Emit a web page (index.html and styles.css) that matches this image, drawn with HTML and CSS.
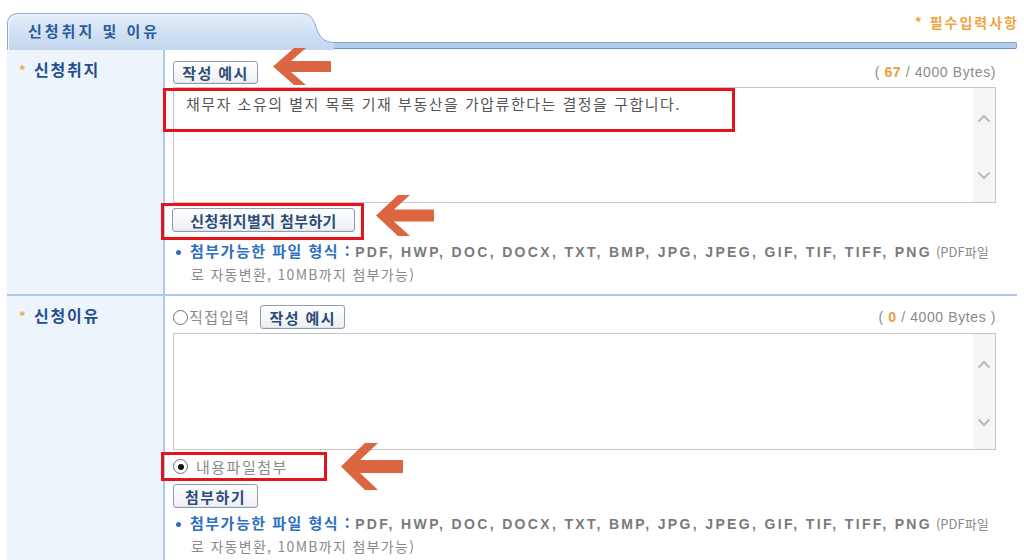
FILE: index.html
```html
<!DOCTYPE html>
<html lang="ko">
<head>
<meta charset="utf-8">
<link rel="stylesheet" href="styles.css">
</head>
<body>
<div class="page">
  <div class="head">
    <div class="tab">
      <div class="tab-body">신청취지 및 이유</div>
      <svg class="tab-curve" width="34" height="37" viewBox="0 0 34 37">
        <defs>
          <linearGradient id="tg" x1="0" y1="0" x2="0" y2="1">
            <stop offset="0" stop-color="#e4edf8"/>
            <stop offset="1" stop-color="#c2d6ee"/>
          </linearGradient>
        </defs>
        <path d="M0 0.5 C10 0.5 12 3 16 14 C20 25 24 29 34 29.5 L34 37 L0 37 Z" fill="url(#tg)"/>
        <path d="M0 0.5 C10 0.5 12 3 16 14 C20 25 24 29 34 29.5" fill="none" stroke="#86abd8" stroke-width="1"/>
      </svg>
    </div>
    <div class="head-right">
      <div class="req">* 필수입력사항</div>
      <div class="bar"></div>
    </div>
  </div>

  <div class="row row1">
    <div class="label"><span class="star">*</span>신청취지</div>
    <div class="content">
      <div class="topline">
        <button class="btn btn-ex">작성 예시</button>
        <div class="count">( <span class="num">67</span> / 4000 Bytes)</div>
      </div>
      <div class="area">
        <div class="area-text">채무자 소유의 별지 목록 기재 부동산을 가압류한다는 결정을 구합니다.</div>
        <div class="scroll">
          <svg width="14" height="9" viewBox="0 0 14 9"><path d="M1.5 7.5 L7 2 L12.5 7.5" fill="none" stroke="#b9b9b9" stroke-width="2"/></svg>
          <svg width="14" height="9" viewBox="0 0 14 9"><path d="M1.5 1.5 L7 7 L12.5 1.5" fill="none" stroke="#b9b9b9" stroke-width="2"/></svg>
        </div>
        <div class="mark mark-text"></div>
      </div>
      <div class="redbox redbox-btn">
        <button class="btn btn-wide">신청취지별지 첨부하기</button>
      </div>
      <div class="notes">
        <div class="l1"><span class="dot"></span><span class="ntitle">첨부가능한 파일 형식 :</span> <span class="types">PDF, HWP, DOC, DOCX, TXT, BMP, JPG, JPEG, GIF, TIF, TIFF, PNG</span> <span class="plain tail">(PDF파일</span></div>
        <div class="l2 plain">로 자동변환, 10MB까지 첨부가능)</div>
      </div>
      <svg class="arrow arrow1" width="58" height="37" viewBox="0 0 58 37"><polygon points="0,18.5 21,0 33,0 18,13 58,13 58,24 18,24 33,37 21,37" fill="#db6641"/></svg>
      <svg class="arrow arrow2" width="58" height="41" viewBox="0 0 58 41"><polygon points="0,20.5 22,0 34,0 18,14.5 58,14.5 58,26.5 18,26.5 34,41 22,41" fill="#db6641"/></svg>
    </div>
  </div>

  <div class="row row2">
    <div class="label"><span class="star">*</span>신청이유</div>
    <div class="content">
      <div class="topline">
        <div class="left-ctrl">
          <span class="radio"></span><span class="rtext">직접입력</span>
          <button class="btn btn-ex btn-ex2">작성 예시</button>
        </div>
        <div class="count">( <span class="num">0</span> / 4000 Bytes )</div>
      </div>
      <div class="area area2">
        <div class="area-text"></div>
        <div class="scroll">
          <svg width="14" height="9" viewBox="0 0 14 9"><path d="M1.5 7.5 L7 2 L12.5 7.5" fill="none" stroke="#b9b9b9" stroke-width="2"/></svg>
          <svg width="14" height="9" viewBox="0 0 14 9"><path d="M1.5 1.5 L7 7 L12.5 1.5" fill="none" stroke="#b9b9b9" stroke-width="2"/></svg>
        </div>
      </div>
      <div class="redbox redbox-radio">
        <span class="radio checked"></span><span class="rtext">내용파일첨부</span>
      </div>
      <button class="btn btn-attach">첨부하기</button>
      <div class="notes notes2">
        <div class="l1"><span class="dot"></span><span class="ntitle">첨부가능한 파일 형식 :</span> <span class="types">PDF, HWP, DOC, DOCX, TXT, BMP, JPG, JPEG, GIF, TIF, TIFF, PNG</span> <span class="plain tail">(PDF파일</span></div>
        <div class="l2 plain">로 자동변환, 10MB까지 첨부가능)</div>
      </div>
      <svg class="arrow arrow3" width="62" height="47" viewBox="0 0 62 47"><polygon points="0,23.5 24,0 37,0 19,17 62,17 62,30 19,30 37,47 24,47" fill="#db6641"/></svg>
    </div>
  </div>
</div>
</body>
</html>
```
FILE: styles.css
```css
html, body {
  margin: 0;
  padding: 0;
  background: #ffffff;
}
body {
  font-family: "Noto Sans CJK KR", "Noto Sans", sans-serif;
  color: #555;
  overflow: hidden;
}
.page {
  width: 1010px;
  margin-left: 7px;
}

/* header */
.head {
  display: flex;
  height: 50px;
}
.tab {
  display: flex;
  align-items: flex-end;
  margin-top: 13px;
  height: 37px;
}
.tab-body {
  width: 272px;
  height: 36px;
  border: 1px solid #86abd8;
  border-right: none;
  border-bottom: none;
  border-top-left-radius: 10px;
  background: linear-gradient(#e4edf8, #c2d6ee);
  box-sizing: content-box;
  padding-left: 20px;
  font-size: 15px;
  font-weight: bold;
  color: #2a5b9c;
  line-height: 34px;
  letter-spacing: 3px;
  box-shadow: inset 1px 1px 0 #f4f8fd;
}
.tab-curve {
  display: block;
}
.head-right {
  flex: 1;
  display: flex;
  flex-direction: column;
  justify-content: flex-end;
}
.req {
  text-align: right;
  font-size: 14px;
  font-weight: bold;
  color: #f0a540;
  line-height: 20px;
  margin-bottom: 10px;
  margin-right: -2px;
  letter-spacing: 2px;
}
.bar {
  height: 5px;
  background: #b3cbe9;
  border-top: 1px solid #7fa4d3;
  border-bottom: 1px solid #6e96cb;
  border-right: 1px solid #7fa4d3;
  border-radius: 0 2px 2px 0;
  margin-bottom: 1px;
}

/* rows */
.row {
  display: grid;
  grid-template-columns: 158px 1fr;
  border-bottom: 2px solid #adc8ea;
}
.label {
  background: #eef4fb;
  border-right: 2px solid #adc8ea;
  padding: 8px 0 0 12px;
  font-size: 16px;
  font-weight: bold;
  color: #1f4f8f;
  line-height: 22px;
  letter-spacing: 1.8px;
}
.star {
  display: inline-block;
  color: #f0a540;
  font-size: 13px;
  width: 15px;
  vertical-align: top;
  line-height: 24px;
}
.content {
  position: relative;
  padding: 10px 21px 10px 8px;
}
.row1 .content {
  height: 224px;
}
.row2 .content {
  height: 264px;
  padding-top: 9px;
}
.topline {
  display: flex;
  justify-content: space-between;
  align-items: center;
  height: 24px;
}
.btn {
  font-family: "Noto Sans CJK KR", sans-serif;
  font-size: 15px;
  font-weight: bold;
  color: #2d4c78;
  background: linear-gradient(#ffffff, #eceff3);
  border: 1px solid #8e9db3;
  border-radius: 3px;
  height: 23px;
  padding: 0 2px;
  line-height: 19px;
  letter-spacing: 1.4px;
  cursor: pointer;
  box-shadow: inset 0 -1px 0 #dde2e8;
}
.btn-ex {
  width: 85px;
}
.count {
  font-family: "Liberation Sans", sans-serif;
  font-size: 14px;
  color: #8a8a8a;
  letter-spacing: 0.6px;
}
.num {
  color: #e3a13a;
  font-weight: bold;
}

/* textarea */
.area {
  position: relative;
  margin-top: 3px;
  height: 114px;
  border: 1px solid #c6c6c6;
  display: flex;
  background: #fff;
}
.area-text {
  flex: 1;
  padding: 5px 0 0 12px;
  font-size: 15px;
  color: #555;
  line-height: 22px;
  letter-spacing: 1.5px;
}
.scroll {
  width: 22px;
  background: #f5f5f5;
  display: flex;
  flex-direction: column;
  justify-content: space-between;
  align-items: center;
  padding: 26px 0 22px;
}
.scroll svg {
  display: block;
}
.mark {
  position: absolute;
  border: 3px solid #e3141c;
  pointer-events: none;
}
.mark-text {
  left: -11px;
  top: 0;
  width: 566px;
  height: 38px;
}

/* red framed blocks */
.redbox {
  border: 3px solid #e3141c;
  margin-left: -12px;
}
.redbox-btn {
  width: 203px;
  height: 37px;
  box-sizing: border-box;
  padding: 2px 0 0 8px;
}
.btn-wide {
  display: block;
  width: 183px;
  height: 24px;
  font-size: 15px;
  letter-spacing: 0.4px;
}
.notes {
  font-size: 14px;
  line-height: 22px;
  margin-top: 0;
}
.l1 {
  margin-left: 3px;
  white-space: nowrap;
}
.l2 {
  margin-left: 18px;
}
.dot {
  display: inline-block;
  width: 5px;
  height: 5px;
  border-radius: 50%;
  background: #2e6fc0;
  margin-right: 9px;
  vertical-align: middle;
  position: relative;
  top: -1px;
}
.ntitle {
  color: #2e6fc0;
  font-weight: bold;
  font-size: 15px;
  letter-spacing: 1.5px;
}
.types {
  font-family: "Liberation Sans", sans-serif;
  font-weight: bold;
  color: #7a7a7a;
  letter-spacing: 2.35px;
}
.plain {
  color: #8a8a8a;
  font-weight: normal;
  letter-spacing: 1.3px;
}
.plain.tail {
  font-size: 13px;
  letter-spacing: 0;
}

/* row 2 */
.left-ctrl {
  display: flex;
  align-items: center;
}
.radio {
  display: inline-block;
  width: 13px;
  height: 13px;
  border: 1px solid #6f6f6f;
  border-radius: 50%;
  background: #fff;
  box-sizing: content-box;
  position: relative;
}
.radio.checked::after {
  content: "";
  position: absolute;
  left: 3.5px;
  top: 3.5px;
  width: 6px;
  height: 6px;
  border-radius: 50%;
  background: #111;
}
.rtext {
  font-size: 15px;
  color: #8a8a8a;
  margin-left: 1px;
  line-height: 22px;
  letter-spacing: 1.5px;
}
.btn-ex2 {
  margin-left: 10px;
  height: 24px;
}
.area2 {
  margin-top: 4px;
  height: 115px;
}
.redbox-radio {
  margin-top: 2px;
  width: 166px;
  height: 29px;
  box-sizing: border-box;
  display: flex;
  align-items: center;
  padding-left: 9px;
}
.redbox-radio .rtext {
  margin-left: 8px;
}
.btn-attach {
  display: block;
  margin-top: 3px;
  width: 85px;
  height: 24px;
  font-size: 15px;
}
.notes2 {
  margin-top: 4px;
}

/* annotation arrows */
.arrow {
  position: absolute;
  display: block;
}
.arrow1 {
  left: 108px;
  top: -2px;
}
.arrow2 {
  left: 211px;
  top: 145px;
}
.arrow3 {
  left: 176px;
  top: 147px;
}
```
